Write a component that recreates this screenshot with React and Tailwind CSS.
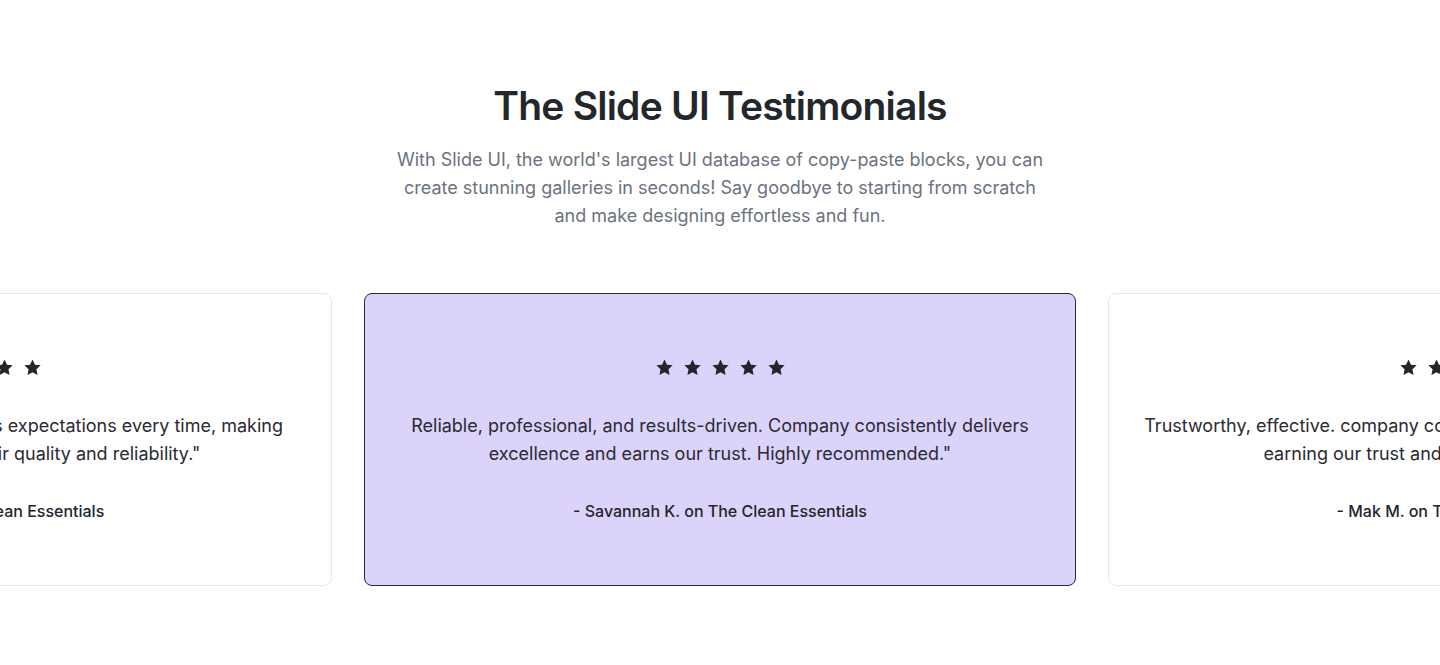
import React from "react";

function Star() {
  return (
    <svg viewBox="0 0 24 24" className="h-[19px] w-[19px]" fill="currentColor">
      <path d="M12 1.8l3.1 6.6 7.2.9-5.3 5 1.4 7.1L12 17.9l-6.4 3.5 1.4-7.1-5.3-5 7.2-.9z" />
    </svg>
  );
}

function Card({ active, line1, line2, author }) {
  return (
    <div
      className={
        "w-[712px] shrink-0 rounded-lg border flex flex-col items-center px-10 pt-[64px] pb-[62px] " +
        (active ? "bg-[#dcd3fa] border-[#2b2a33]" : "bg-white border-[#e8e8ea]")
      }
    >
      <div className="flex items-center gap-[9px] h-[18px] text-[#24242b]">
        <Star />
        <Star />
        <Star />
        <Star />
        <Star />
      </div>
      <p className="mt-[36px] text-center text-[18px] leading-[28px] text-[#2a2a33] whitespace-nowrap">
        {line1}
        <br />
        {line2}
      </p>
      <p className="mt-[31px] text-[16px] leading-6 font-medium text-[#24242b] whitespace-nowrap">{author}</p>
    </div>
  );
}

export default function App() {
  return (
    <div className="w-full h-[665px] bg-white overflow-hidden" style={{ fontFamily: "Inter, 'Noto Sans', sans-serif" }}>
      <div className="flex flex-col items-center pt-[82px]">
        <h1 className="text-[39px] leading-[48px] font-semibold tracking-[-0.02em] text-[#23262b]">
          The Slide UI Testimonials
        </h1>
        <p className="mt-4 max-w-[650px] text-center text-[18px] leading-[28px] text-[#6b7280]">
          With Slide UI, the world's largest UI database of copy-paste blocks, you can create stunning galleries in seconds! Say goodbye to starting from scratch and make designing effortless and fun.
        </p>
      </div>
      <div className="mt-[63px] flex justify-center gap-8">
        <Card
          line1="Exceptional service. Company exceeds expectations every time, making"
          line2={'us genuinely confident in their quality and reliability."'}
          author="- John D. on The Clean Essentials"
        />
        <Card
          active
          line1="Reliable, professional, and results-driven. Company consistently delivers"
          line2={'excellence and earns our trust. Highly recommended."'}
          author="- Savannah K. on The Clean Essentials"
        />
        <Card
          line1="Trustworthy, effective. company consistently delivers on all of its promises,"
          line2={'earning our trust and loyalty every single time."'}
          author="- Mak M. on The Clean Essentials"
        />
      </div>
    </div>
  );
}
